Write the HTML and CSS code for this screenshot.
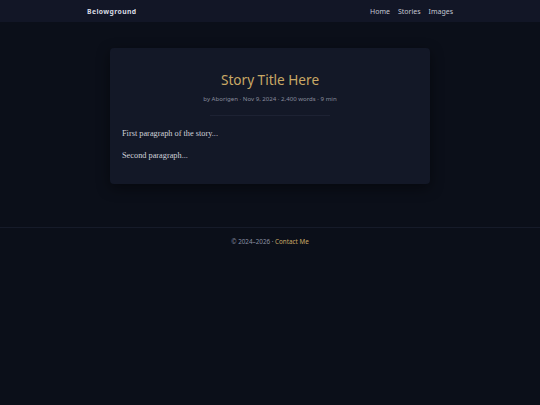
FILE: index.html
```html
<!DOCTYPE html>
<html lang="en">
<head>
<meta charset="utf-8">
<title>Belowground</title>
<link rel="stylesheet" href="styles.css">
</head>
<body>
<header class="nav">
  <div class="nav-inner">
    <a class="brand" href="#">Belowground</a>
    <nav class="links">
      <a href="#">Home</a>
      <a href="#">Stories</a>
      <a href="#">Images</a>
    </nav>
  </div>
</header>
<main class="main">
  <article class="card">
    <h1 class="title">Story Title Here</h1>
    <div class="meta">by Aborigen · Nov 9, 2024 · 2,400 words · 9 min</div>
    <hr class="divider">
    <div class="body">
      <p>First paragraph of the story...</p>
      <p>Second paragraph...</p>
    </div>
  </article>
</main>
<footer class="footer">
  © 2024–2026 · <a href="#">Contact Me</a>
</footer>
</body>
</html>
```
FILE: styles.css
```css
html, body {
  margin: 0;
  padding: 0;
  background: #0b0f19;
  font-family: "Noto Sans", "Open Sans", sans-serif;
  color: #c8ccd6;
}
a { text-decoration: none; }
.nav {
  background: #121626;
  height: 22px;
}
.nav-inner {
  width: 366px;
  margin: 0 auto;
  height: 22px;
  display: flex;
  align-items: center;
  justify-content: space-between;
}
.brand {
  color: #d8dbe3;
  font-weight: 700;
  font-size: 6.8px;
  letter-spacing: 0.4px;
}
.links {
  display: flex;
  gap: 8px;
}
.links a {
  color: #c4c8d4;
  font-size: 7px;
}
.main {
  padding: 26px 0 43px;
}
.card {
  width: 320px;
  margin: 0 auto;
  box-sizing: border-box;
  background: #131827;
  border-radius: 4px;
  padding: 21px 12px 21px;
  box-shadow: 0 4px 14px rgba(0,0,0,0.45);
}
.title {
  margin: 0;
  text-align: center;
  font-weight: 400;
  font-size: 13.6px;
  line-height: 22px;
  color: #c9a865;
}
.meta {
  text-align: center;
  font-size: 6.1px;
  line-height: 10px;
  color: #888c9c;
  margin-top: 3px;
}
.divider {
  width: 120px;
  margin: 11px auto 11px;
  border: 0;
  height: 1px;
  background: #1d2233;
}
.body p {
  margin: 0 0 8px;
  font-family: "Liberation Serif", serif;
  font-size: 8.3px;
  line-height: 14px;
  color: #d0d2da;
}
.body p:last-child { margin-bottom: 0; }
.footer {
  border-top: 1px solid #161b29;
  text-align: center;
  font-size: 6.3px;
  color: #8a90a2;
  padding-top: 9px;
}
.footer a { color: #c9a865; }
```
